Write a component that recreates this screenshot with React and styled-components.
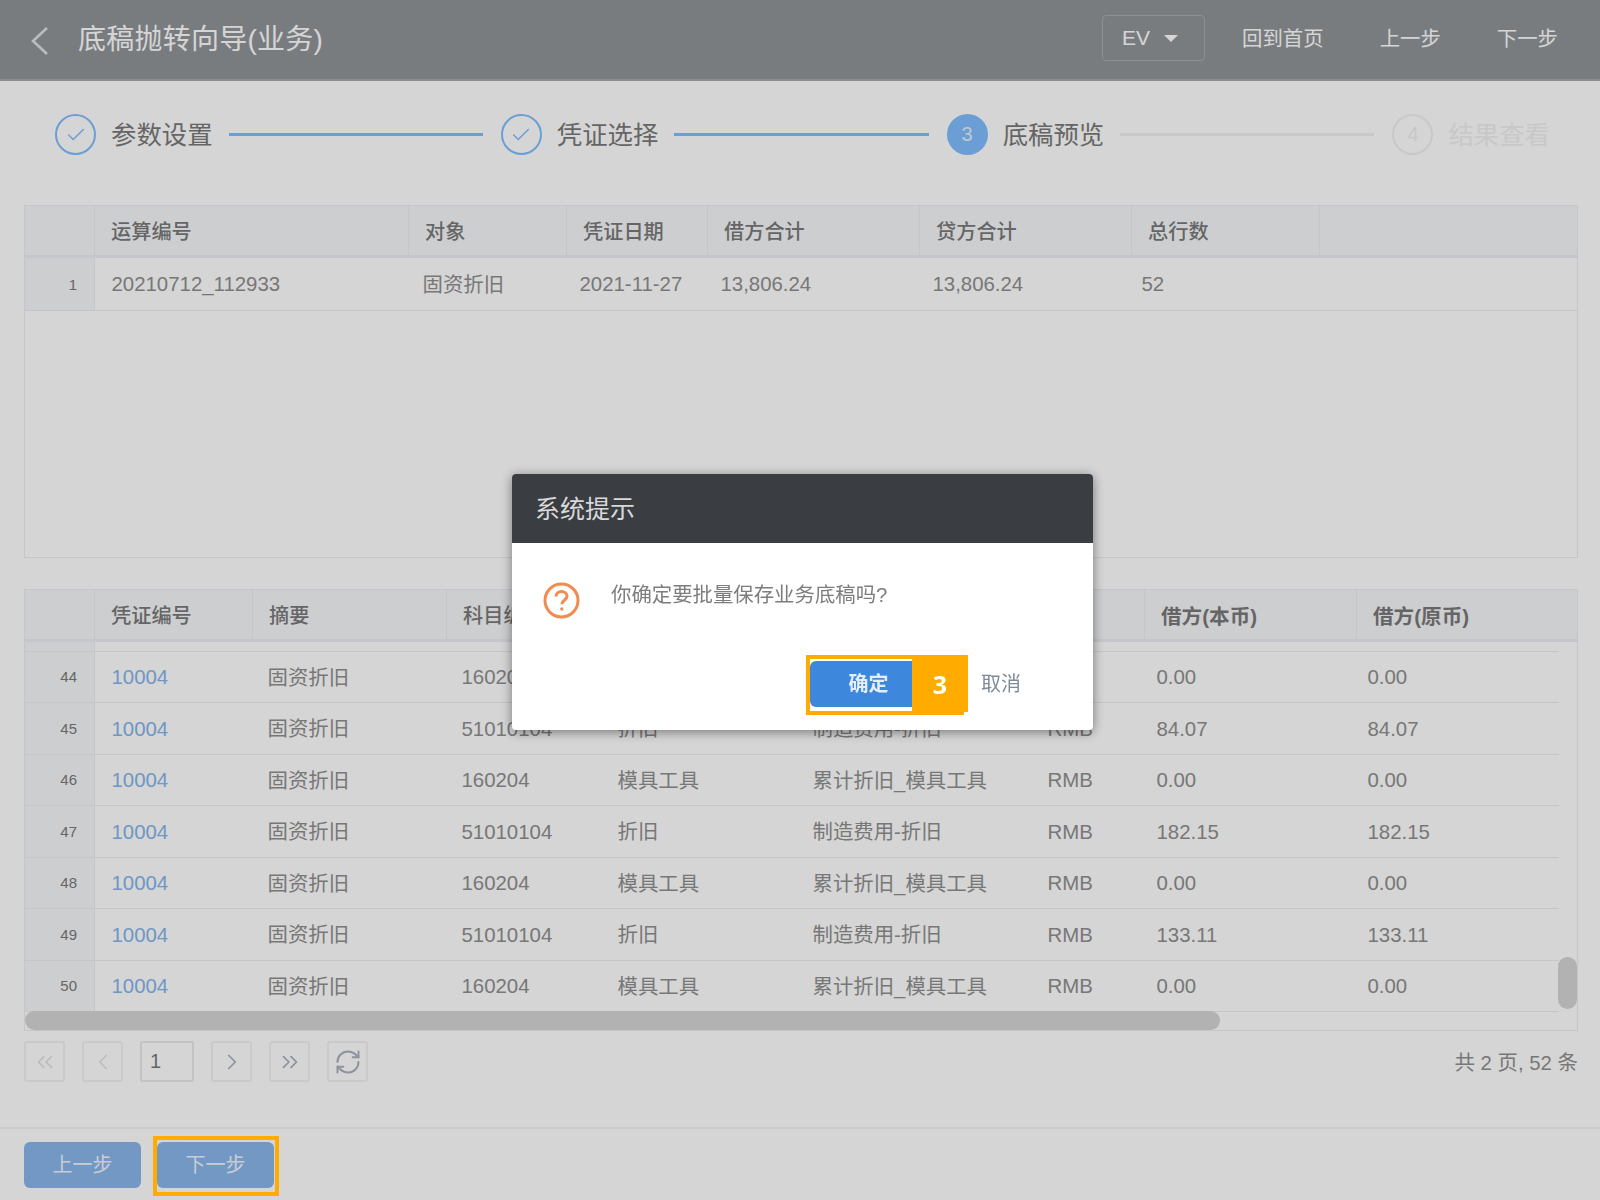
import React from 'react';
import styled, { createGlobalStyle } from 'styled-components';
import { Check, ChevronLeft, ChevronRight, ChevronsLeft, ChevronsRight, RefreshCw } from 'lucide-react';

const orange = '#ffab00';

const Global = createGlobalStyle`
  html, body {
    margin: 0;
    background: #fff;
    overflow: hidden;
    font-family: "Liberation Sans", "Noto Sans CJK SC", sans-serif;
  }
`;

const Page = styled.div`
  width: 1600px;
  height: 1200px;
  display: flex;
  flex-direction: column;
`;

const Mask = styled.div`
  position: fixed;
  inset: 0;
  z-index: 10;
  background: rgba(0, 0, 0, 0.165);
`;

/* top bar */
const TopBar = styled.header`
  flex: none;
  height: 81px;
  box-sizing: border-box;
  display: flex;
  align-items: center;
  padding: 0 42px 3px 30px;
  background: #919599;
  border-bottom: 2px solid #a6a9ad;
  color: #fff;
`;

const Back = styled.svg`
  width: 19px;
  height: 30px;
  margin-top: 6px;
  flex: none;
`;

const Title = styled.h1`
  margin: -3px auto 0 29px;
  font-size: 28px;
  font-weight: 400;
  letter-spacing: 0.25px;
`;

const LangBox = styled.div`
  width: 103px;
  height: 46px;
  box-sizing: border-box;
  display: flex;
  align-items: center;
  padding-left: 19px;
  border: 1px solid #a7adb5;
  border-radius: 4px;
  font-size: 21px;
  margin-right: 37px;
`;

const Caret = styled.span`
  margin-left: 14px;
  border-left: 7px solid transparent;
  border-right: 7px solid transparent;
  border-top: 7px solid #fff;
`;

const NavLink = styled.a`
  font-size: 20.4px;
  margin-top: -2px;
  & + & {
    margin-left: 56px;
  }
`;

/* wizard steps */
const Steps = styled.div`
  flex: none;
  height: 106px;
  box-sizing: border-box;
  padding: 33px 50px 0 55px;
  display: flex;
  align-items: flex-start;
`;

const StepItem = styled.div`
  display: flex;
  align-items: center;
  height: 41px;
  gap: 15px;
  flex: none;
`;

const StepCircle = styled.span`
  width: 41px;
  height: 41px;
  box-sizing: border-box;
  border-radius: 50%;
  display: flex;
  align-items: center;
  justify-content: center;
  font-size: 20px;
  color: ${p => (p.$state === 'todo' ? '#f0f0f0' : p.$state === 'active' ? '#e6f0fb' : '#80beff')};
  background: ${p => (p.$state === 'active' ? '#80beff' : 'transparent')};
  border: 2px solid ${p => (p.$state === 'todo' ? '#f0f0f0' : '#80beff')};
`;

const StepLabel = styled.span`
  font-size: 25.4px;
  margin-top: -4px;
  color: ${p => (p.$state === 'todo' ? '#f0f0f0' : '#7a7a7a')};
`;

const StepLine = styled.span`
  flex: 1;
  height: 3px;
  margin: 19px 18px 0 16px;
  background: ${p => (p.$done ? '#80beff' : '#f0f0f0')};
`;

/* tables */
const Content = styled.main`
  flex: 1;
  padding: 18px 22px 0 24px;
  display: flex;
  flex-direction: column;
`;

const TableBox = styled.section`
  position: relative;
  height: ${p => p.$height}px;
  box-sizing: border-box;
  margin-bottom: ${p => p.$gap}px;
  border: 1px solid #eceef4;
  overflow: hidden;
`;

const HeadRow = styled.div`
  display: grid;
  grid-template-columns: ${p => p.$cols};
  height: 52px;
  box-sizing: border-box;
  background: #f6f7fa;
  border-bottom: 3px solid #eceef4;
`;

const HeadCell = styled.div`
  display: flex;
  align-items: center;
  padding-left: 16px;
  border-right: 1px solid #eceef4;
  font-size: ${p => (p.$bold ? 20.6 : 20.2)}px;
  font-weight: ${p => (p.$bold ? 700 : 500)};
  color: #7a7a7a;
  white-space: nowrap;
  &:last-child {
    border-right: 0;
  }
`;

const BodyRow = styled.div`
  display: grid;
  grid-template-columns: ${p => p.$cols};
  height: ${p => p.$height}px;
  box-sizing: border-box;
  border-bottom: 1px solid #eceef4;
  ${p => p.$short && 'width: 1534px;'}
`;

const RowNum = styled.div`
  display: flex;
  align-items: center;
  justify-content: flex-end;
  padding-right: 17px;
  background: #f6f7fa;
  border-right: 1px solid #eceef4;
  font-size: 15px;
  color: #7a7a7a;
`;

const Cell = styled.div`
  display: flex;
  align-items: center;
  padding: ${p => (p.$low ? 2 : 0)}px 0 ${p => (p.$cjk ? 2 : 0)}px ${p => (p.$cjk ? 15.5 : 16.5)}px;
  font-size: 20.4px;
  color: #8f8f8f;
  white-space: nowrap;
`;

const VoucherLink = styled.a`
  color: #85b5ec;
`;

const ScrollGap = styled.div`
  height: 9.5px;
  box-sizing: border-box;
  width: 1534px;
  border-bottom: 1px solid #eceef4;
  display: grid;
  grid-template-columns: 70px 1fr;
  &::before {
    content: '';
    background: #f6f7fa;
    border-right: 1px solid #eceef4;
  }
`;

const HBar = styled.div`
  position: absolute;
  left: 0;
  bottom: 0;
  width: 1195px;
  height: 19px;
  border-radius: 10px;
  background: #d5d5d5;
`;

const VBar = styled.div`
  position: absolute;
  right: 0;
  top: 367px;
  width: 19px;
  height: 52px;
  border-radius: 10px;
  background: #d5d5d5;
`;

/* pager */
const Pager = styled.div`
  display: flex;
  align-items: center;
  gap: 17px;
  margin-top: -22px;
  height: 41px;
`;

const PageBtn = styled.button`
  width: 41px;
  height: 41px;
  padding: 0;
  display: flex;
  align-items: center;
  justify-content: center;
  background: transparent;
  border: 2px solid #f2f2f2;
  border-radius: 3px;
  color: ${p => (p.$off ? '#e2e2e2' : '#a8b0bc')};
`;

const PageInput = styled.div`
  width: 54px;
  height: 41px;
  box-sizing: border-box;
  display: flex;
  align-items: center;
  padding-left: 8px;
  border: 2px solid #eaeaea;
  border-radius: 2px;
  font-size: 20px;
  color: #7a7a7a;
`;

const PageInfo = styled.span`
  margin-left: auto;
  font-size: 20.4px;
  margin-top: -2px;
  color: #8f8f8f;
  white-space: pre;
`;

/* footer */
const Footer = styled.footer`
  flex: none;
  height: 73px;
  box-sizing: border-box;
  padding: 13px 0 0 24px;
  display: flex;
  gap: 16px;
  border-top: 2px solid #f2f2f2;
`;

const FooterBtn = styled.button`
  width: 117px;
  height: 46px;
  padding: 0 0 3px;
  border: 0;
  border-radius: 6px;
  background: #8ab6eb;
  color: #f0f6ff;
  font: 400 20px "Liberation Sans", "Noto Sans CJK SC", sans-serif;
`;

const NextWrap = styled.div`
  position: relative;
  &::after {
    content: '';
    position: absolute;
    z-index: 20;
    left: -4px;
    top: -6px;
    width: 126px;
    height: 60px;
    box-sizing: border-box;
    border: 4px solid ${orange};
  }
`;

/* dialog */
const Dialog = styled.div`
  position: fixed;
  z-index: 20;
  left: 512px;
  top: 474px;
  width: 581px;
  border-radius: 4px;
  background: #fff;
  box-shadow: 0 2px 12px rgba(0, 0, 0, 0.45);
`;

const DialogHead = styled.div`
  height: 69px;
  box-sizing: border-box;
  display: flex;
  align-items: center;
  padding: 0 0 3px 23px;
  border-radius: 4px 4px 0 0;
  background: #3a3e42;
  color: #d9d9d9;
  font-size: 25px;
`;

const DialogBody = styled.div`
  height: 118px;
  box-sizing: border-box;
  padding: 38px 0 0 31px;
  display: flex;
  align-items: flex-start;
  gap: 31px;
`;

const AskIcon = styled.svg`
  width: 37px;
  height: 37px;
  flex: none;
  margin-top: 1px;
`;

const Message = styled.p`
  margin: 0;
  font-size: 20.4px;
  line-height: 28px;
  color: #7d7d7d;
`;

const DialogFoot = styled.div`
  height: 69px;
  box-sizing: border-box;
  padding-left: 294px;
  display: flex;
  align-items: flex-start;
`;

const Highlight = styled.div`
  display: flex;
  align-items: flex-start;
  width: 158px;
  height: 60px;
  box-sizing: border-box;
  margin-top: -6px;
  border: 4px solid ${orange};
`;

const OkBtn = styled.button`
  width: 102px;
  height: 46px;
  margin-top: 2px;
  flex: none;
  padding: 0 0 3px 15px;
  border: 0;
  border-radius: 6px 0 0 6px;
  background: #3d88dd;
  color: #e4eefa;
  font: 700 20px "Liberation Sans", "Noto Sans CJK SC", sans-serif;
`;

const Badge = styled.div`
  flex: none;
  width: 56px;
  height: 57px;
  margin: -4px -8px 0 0;
  display: flex;
  align-items: center;
  justify-content: center;
  background: ${orange};
  color: #fff;
  font: 700 25px "Open Sans", sans-serif;
`;

const CancelBtn = styled.a`
  margin: 7px 0 0 17px;
  font-size: 20px;
  color: #7f8a98;
`;

const topCols = '70px 314px 158px 141px 212px 212px 188px 1fr';
const topBodyCols = '70px 312px 156px 141px 212px 209px 1fr';
const topHead = ['', '运算编号', '对象', '凭证日期', '借方合计', '贷方合计', '总行数', ''];

const mainCols = '70px 158px 194px 153px 195px 235px 115px 212px 1fr';
const mainBodyCols = '70px 157px 193px 157px 195px 234px 109px 211px 1fr';
const mainHead = ['', '凭证编号', '摘要', '科目编号', '科目名称', '科目全称', '币种', '借方(本币)', '借方(原币)'];

const tool = { code: '160204', name: '模具工具', full: '累计折旧_模具工具' };
const dep = { code: '51010104', name: '折旧', full: '制造费用-折旧' };

const rows = [
  { no: 44, ...tool, amount: '0.00' },
  { no: 45, ...dep, amount: '84.07' },
  { no: 46, ...tool, amount: '0.00' },
  { no: 47, ...dep, amount: '182.15' },
  { no: 48, ...tool, amount: '0.00' },
  { no: 49, ...dep, amount: '133.11' },
  { no: 50, ...tool, amount: '0.00' },
];

const steps = [
  { label: '参数设置', state: 'done' },
  { label: '凭证选择', state: 'done' },
  { label: '底稿预览', state: 'active', no: 3 },
  { label: '结果查看', state: 'todo', no: 4 },
];

const App = () => (
  <Page>
    <Global />
    <TopBar>
      <Back viewBox="0 0 19 30" fill="none" stroke="#dfe2e5" strokeWidth="2.6">
        <polyline points="17,2 3,15 17,28" />
      </Back>
      <Title>底稿抛转向导(业务)</Title>
      <LangBox>EV<Caret /></LangBox>
      <NavLink>回到首页</NavLink>
      <NavLink>上一步</NavLink>
      <NavLink>下一步</NavLink>
    </TopBar>

    <Steps>
      {steps.map((s, i) => (
        <React.Fragment key={s.label}>
          <StepItem>
            <StepCircle $state={s.state}>
              {s.state === 'done' ? <Check size={22} strokeWidth={1.6} /> : s.no}
            </StepCircle>
            <StepLabel $state={s.state}>{s.label}</StepLabel>
          </StepItem>
          {i < 3 && <StepLine $done={i < 2} />}
        </React.Fragment>
      ))}
    </Steps>

    <Content>
      <TableBox $height={353} $gap={31}>
        <HeadRow $cols={topCols}>
          {topHead.map((h, i) => <HeadCell key={i}>{h}</HeadCell>)}
        </HeadRow>
        <BodyRow $cols={topBodyCols} $height={53}>
          <RowNum>1</RowNum>
          <Cell>20210712_112933</Cell>
          <Cell $cjk>固资折旧</Cell>
          <Cell>2021-11-27</Cell>
          <Cell>13,806.24</Cell>
          <Cell>13,806.24</Cell>
          <Cell>52</Cell>
        </BodyRow>
      </TableBox>

      <TableBox $height={442} $gap={32}>
        <HeadRow $cols={mainCols}>
          {mainHead.map((h, i) => <HeadCell key={i} $bold={i > 6}>{h}</HeadCell>)}
        </HeadRow>
        <ScrollGap />
        {rows.map(r => (
          <BodyRow key={r.no} $cols={mainBodyCols} $height={51.5} $short>
            <RowNum>{r.no}</RowNum>
            <Cell $low><VoucherLink>10004</VoucherLink></Cell>
            <Cell $cjk>固资折旧</Cell>
            <Cell $low>{r.code}</Cell>
            <Cell $cjk>{r.name}</Cell>
            <Cell $cjk>{r.full}</Cell>
            <Cell $low>RMB</Cell>
            <Cell $low>{r.amount}</Cell>
            <Cell $low>{r.amount}</Cell>
          </BodyRow>
        ))}
        <HBar />
        <VBar />
      </TableBox>

      <Pager>
        <PageBtn $off><ChevronsLeft size={26} strokeWidth={1.6} /></PageBtn>
        <PageBtn $off><ChevronLeft size={26} strokeWidth={1.6} /></PageBtn>
        <PageInput>1</PageInput>
        <PageBtn><ChevronRight size={26} strokeWidth={1.6} /></PageBtn>
        <PageBtn><ChevronsRight size={26} strokeWidth={1.6} /></PageBtn>
        <PageBtn><RefreshCw size={28} strokeWidth={1.7} /></PageBtn>
        <PageInfo>共 2 页, 52 条</PageInfo>
      </Pager>
    </Content>

    <Footer>
      <FooterBtn>上一步</FooterBtn>
      <NextWrap><FooterBtn>下一步</FooterBtn></NextWrap>
    </Footer>

    <Mask />

    <Dialog>
      <DialogHead>系统提示</DialogHead>
      <DialogBody>
        <AskIcon viewBox="0 0 37 37" fill="none" stroke="#f28b50" strokeWidth="3">
          <circle cx="18.5" cy="18.5" r="16.5" />
          <path d="M13 14.5c0-3 2.5-5 5.5-5s5.5 2 5.5 4.8c0 3.6-5.2 3.8-5.2 8" />
          <circle cx="18.8" cy="27" r="1" fill="#f28b50" strokeWidth="1.4" />
        </AskIcon>
        <Message>你确定要批量保存业务底稿吗?</Message>
      </DialogBody>
      <DialogFoot>
        <Highlight>
          <OkBtn>确定</OkBtn>
          <Badge>3</Badge>
        </Highlight>
        <CancelBtn>取消</CancelBtn>
      </DialogFoot>
    </Dialog>
  </Page>
);

export default App;
